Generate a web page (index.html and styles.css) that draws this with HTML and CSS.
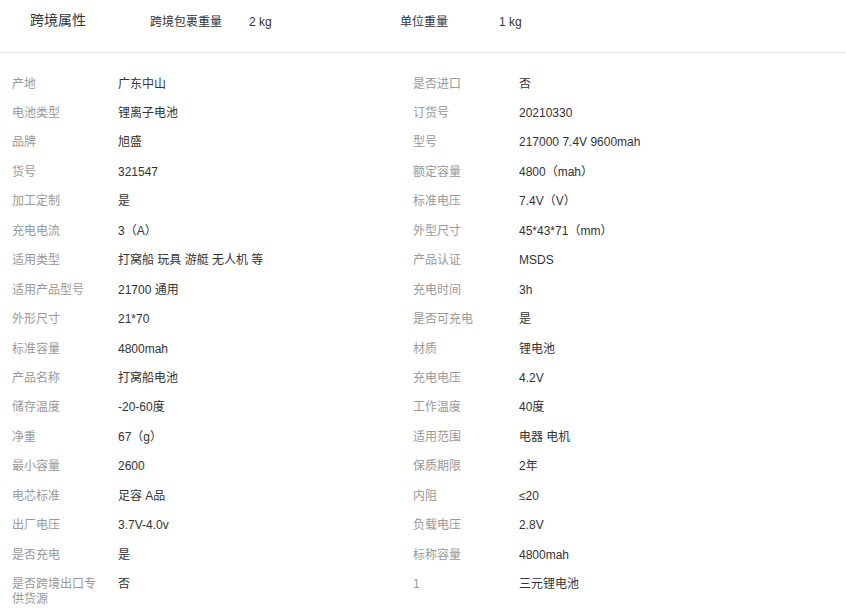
FILE: index.html
```html
<!DOCTYPE html>
<html lang="zh-CN">
<head>
<meta charset="utf-8">
<title>跨境属性</title>
<link rel="stylesheet" href="styles.css">
</head>
<body>
<div class="page">
  <div class="cross">
    <div class="cross-title">跨境属性</div>
    <div class="cross-item">
      <span class="cross-label">跨境包裹重量</span>
      <span class="cross-value">2 kg</span>
    </div>
    <div class="cross-item">
      <span class="cross-label">单位重量</span>
      <span class="cross-value">1 kg</span>
    </div>
  </div>
  <div class="attrs">
    <div class="attr"><span class="label">产地</span><span class="value">广东中山</span></div>
    <div class="attr"><span class="label">是否进口</span><span class="value">否</span></div>
    <div class="attr"><span class="label">电池类型</span><span class="value">锂离子电池</span></div>
    <div class="attr"><span class="label">订货号</span><span class="value">20210330</span></div>
    <div class="attr"><span class="label">品牌</span><span class="value">旭盛</span></div>
    <div class="attr"><span class="label">型号</span><span class="value">217000 7.4V 9600mah</span></div>
    <div class="attr"><span class="label">货号</span><span class="value">321547</span></div>
    <div class="attr"><span class="label">额定容量</span><span class="value">4800（mah）</span></div>
    <div class="attr"><span class="label">加工定制</span><span class="value">是</span></div>
    <div class="attr"><span class="label">标准电压</span><span class="value">7.4V（V）</span></div>
    <div class="attr"><span class="label">充电电流</span><span class="value">3（A）</span></div>
    <div class="attr"><span class="label">外型尺寸</span><span class="value">45*43*71（mm）</span></div>
    <div class="attr"><span class="label">适用类型</span><span class="value">打窝船 玩具 游艇 无人机 等</span></div>
    <div class="attr"><span class="label">产品认证</span><span class="value">MSDS</span></div>
    <div class="attr"><span class="label">适用产品型号</span><span class="value">21700 通用</span></div>
    <div class="attr"><span class="label">充电时间</span><span class="value">3h</span></div>
    <div class="attr"><span class="label">外形尺寸</span><span class="value">21*70</span></div>
    <div class="attr"><span class="label">是否可充电</span><span class="value">是</span></div>
    <div class="attr"><span class="label">标准容量</span><span class="value">4800mah</span></div>
    <div class="attr"><span class="label">材质</span><span class="value">锂电池</span></div>
    <div class="attr"><span class="label">产品名称</span><span class="value">打窝船电池</span></div>
    <div class="attr"><span class="label">充电电压</span><span class="value">4.2V</span></div>
    <div class="attr"><span class="label">储存温度</span><span class="value">-20-60度</span></div>
    <div class="attr"><span class="label">工作温度</span><span class="value">40度</span></div>
    <div class="attr"><span class="label">净重</span><span class="value">67（g）</span></div>
    <div class="attr"><span class="label">适用范围</span><span class="value">电器 电机</span></div>
    <div class="attr"><span class="label">最小容量</span><span class="value">2600</span></div>
    <div class="attr"><span class="label">保质期限</span><span class="value">2年</span></div>
    <div class="attr"><span class="label">电芯标准</span><span class="value">足容 A品</span></div>
    <div class="attr"><span class="label">内阻</span><span class="value">≤20</span></div>
    <div class="attr"><span class="label">出厂电压</span><span class="value">3.7V-4.0v</span></div>
    <div class="attr"><span class="label">负载电压</span><span class="value">2.8V</span></div>
    <div class="attr"><span class="label">是否充电</span><span class="value">是</span></div>
    <div class="attr"><span class="label">标称容量</span><span class="value">4800mah</span></div>
    <div class="attr"><span class="label">是否跨境出口专供货源</span><span class="value">否</span></div>
    <div class="attr"><span class="label">1</span><span class="value">三元锂电池</span></div>
  </div>
</div>
</body>
</html>
```

FILE: styles.css
```css
* {
  box-sizing: border-box;
}

html, body {
  margin: 0;
  padding: 0;
  background: #fff;
}

body {
  font-family: "Liberation Sans", "Noto Sans CJK SC", Arial, sans-serif;
  font-size: 12px;
  color: #333;
}

.page {
  width: 846px;
}

.cross {
  display: flex;
  align-items: center;
  height: 53px;
  padding-bottom: 12px;
  border-bottom: 1px solid #e5e5e5;
  line-height: 20px;
}

.cross-title {
  width: 150px;
  padding-left: 30px;
  font-size: 14px;
  color: #333;
}

.cross-item {
  display: flex;
  align-items: center;
  width: 250px;
  padding-top: 4px;
}

.cross-label {
  width: 99px;
  color: #333;
}

.cross-value {
  color: #333;
}

.attrs {
  display: grid;
  grid-template-columns: 401px 1fr;
  padding-top: 16px;
}

.attr {
  display: flex;
  align-items: flex-start;
  padding: 7.5px 0 7.5px 12px;
  line-height: 14.45px;
}

.label {
  flex: none;
  width: 90px;
  margin-right: 16px;
  color: #999;
}

.value {
  color: #333;
}
```
